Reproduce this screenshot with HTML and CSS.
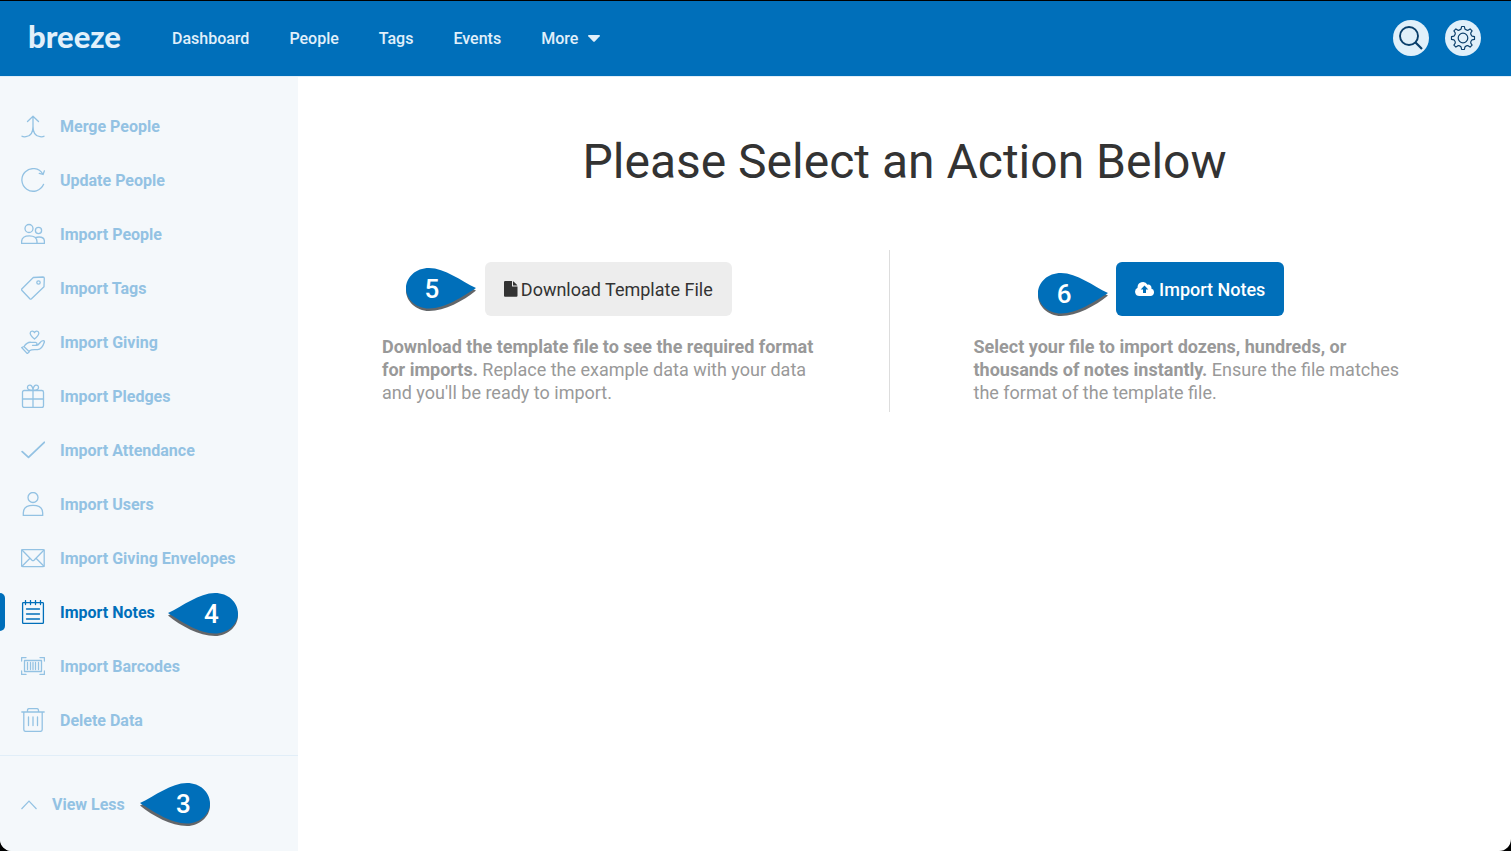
FILE: index.html
```
<!DOCTYPE html>
<html lang="en">
<head>
<meta charset="utf-8">
<meta name="viewport" content="width=device-width, initial-scale=1">
<title>Breeze - Import Notes</title>
<link rel="stylesheet" href="styles.css">
</head>
<body>
<svg class="sprite" aria-hidden="true">
  <symbol id="drop" viewBox="0 0 72 46">
    <path class="drop-shade" d="M1 23.500C16 16.500 32 3.500 48 3.500C61 3.500 71 13 71 23.500C71 34 61 44 48 44C32 44 14 34 1 23.500Z"/>
    <path class="drop-face" d="M1 21C16 14 32 1 48 1C61 1 71 10 71 21.500C71 32 61 41.500 48 41.500C32 41.500 14 29.500 1 21Z"/>
  </symbol>
</svg>

<header class="topbar">
  <a class="logo" href="#">breeze</a>
  <nav class="mainnav" aria-label="Main">
    <a href="#">Dashboard</a>
    <a href="#">People</a>
    <a href="#">Tags</a>
    <a href="#">Events</a>
    <button class="more" type="button">More
      <svg width="12" height="7" viewBox="0 0 12 7" aria-hidden="true"><path d="M.8 0h10.400q1.200.3.500 1.200L7 6.300q-1 1-2 0L.3 1.200Q-.4.300.8 0z" fill="currentColor"/></svg>
    </button>
  </nav>
  <div class="tools">
    <button class="round" type="button" aria-label="Search">
      <svg width="26" height="26" viewBox="0 0 26 26"><circle cx="11" cy="11" r="9" stroke-width="1.900"/><path d="M17.300 17.300L24 24" stroke-width="2.200"/></svg>
    </button>
    <button class="round" type="button" aria-label="Settings">
      <svg width="26" height="26" viewBox="-13 -13 26 26"><circle r="4.800" stroke-width="1.200"/><path stroke-width="1.200" d="M-1.900-9L-1.400-11.500H1.400L1.900-9Q3.500-7.500 5-7.700L7.100-9.100L9.100-7.100L7.700-5Q7.500-3.500 9-1.900L11.500-1.400V1.400L9 1.900Q7.500 3.500 7.700 5L9.100 7.100L7.100 9.100L5 7.700Q3.500 7.500 1.900 9L1.400 11.500H-1.400L-1.900 9Q-3.500 7.500-5 7.700L-7.100 9.100L-9.100 7.100L-7.700 5Q-7.500 3.500-9 1.900L-11.500 1.400V-1.400L-9-1.900Q-7.500-3.500-7.700-5L-9.100-7.100L-7.100-9.100L-5-7.700Q-3.500-7.500-1.900-9Z"/></svg>
    </button>
  </div>
</header>

<div class="shell">
  <aside class="sidebar">
    <nav class="sidenav" aria-label="Data tools">
      <a href="#"><svg class="icon" viewBox="0 0 24 24"><path d="M6.500 7.500L12 2.200l5.500 5.300M12 2.500v10c0 6-2.500 9.800-7 10.200-2 .2-3.300.1-4-.5M12 12.500c0 6 2.500 9.800 7 10.200 2 .2 3.300.1 4-.5"/></svg>Merge People</a>
      <a href="#"><svg class="icon" viewBox="0 0 24 24"><path d="M22.600 16.300A11.300 11.300 0 1 1 21.800 6M18.300 5.300l3.800 1.200 1.300-3.700"/></svg>Update People</a>
      <a href="#"><svg class="icon" viewBox="0 0 24 24"><circle cx="8" cy="6.500" r="4"/><circle cx="17.500" cy="8.500" r="3.100"/><path d="M.6 21.400v-1.600c0-4 3-6 7.800-6s7.600 2 7.600 6v1.600zM14.500 15.600c1-.4 2-.6 3.500-.6 3.800 0 5.400 2 5.400 4.400v2H16"/></svg>Import People</a>
      <a href="#"><svg class="icon" viewBox="0 0 24 24"><path d="M12.300 1.500L22 1q1.300 0 1.300 1.300l-.3 8.500L10.500 22.700q-.9.800-1.700 0L1 14.500q-.9-.9 0-1.800z"/><circle cx="17.500" cy="6.500" r="1.700"/></svg>Import Tags</a>
      <a href="#"><svg class="icon" viewBox="0 0 24 24"><path d="M13.500 9C10 6 9 4.800 9.200 3c.3-2.200 3.300-2.500 4.300-.4 1-2.100 4-1.800 4.300.4C18 4.800 17 6 13.500 9zM.7 17.500l2.200-1 5.400 5.200-2 1.900zM3 16.500c2-3 4-4.500 7-4.200h4.500c2 .2 2 2.800 0 3h-3 4c3 0 3.400-4.500 6.500-4.700 1-.1 1.600.6 1.300 1.700-1.300 4-3.300 7.300-6.800 7.300-3.500.1-6-.5-8 1.200"/></svg>Import Giving</a>
      <a href="#"><svg class="icon" viewBox="0 0 24 24"><rect x="1.500" y="6.500" width="21" height="17" rx="1.700"/><path d="M1.500 15h21M12 6.500v17M12 6.300C8 6.500 6.400 5.300 6.500 3.300 6.700.2 11.500-.5 12 6.300 12.500-.5 17.300.2 17.500 3.300c.1 2-1.500 3.200-5.500 3z"/></svg>Import Pledges</a>
      <a href="#"><svg class="icon" viewBox="0 0 24 24"><path d="M1.200 13.700l6.300 5.600L23.300 4.300" stroke-width="1.800"/></svg>Import Attendance</a>
      <a href="#"><svg class="icon" viewBox="0 0 24 24"><circle cx="12" cy="5.500" r="5"/><path d="M2.300 23.400V21c0-5 3.500-7.600 9.700-7.600s9.700 2.600 9.700 7.600v2.400z"/></svg>Import Users</a>
      <a href="#"><svg class="icon" viewBox="0 0 24 24"><rect x=".6" y="3.600" width="22.600" height="17" rx="1"/><path d="M1 4l10 10.200q1 .9 2 0L23 4M1 20.200l8-8M23 20.200l-8-8"/></svg>Import Giving Envelopes</a>
      <a href="#" class="active" aria-current="page"><svg class="icon" viewBox="0 0 24 24"><rect x="1.600" y="2.600" width="20.800" height="20.800" rx=".8"/><path d="M4.500.6v4M9.500.6v4M14.500.6v4M19.500.6v4M5.500 9h13M5.500 14h13M5.500 19h13"/></svg>Import Notes
        <span class="callout callout-left"><svg width="72" height="46" aria-hidden="true"><use href="#drop"/></svg><b>4</b></span></a>
      <a href="#"><svg class="icon" viewBox="0 0 24 24"><path d="M.6 7V3.600H5M19 3.600h4.400V7M.6 17v3.400H5M19 20.400h4.400V17"/><rect x="3.500" y="6.500" width="17" height="11"/><path d="M6.500 8.500v7M9.500 8.500v7M12 8.500v7M14.500 8.500v7M17.500 8.500v7"/></svg>Import Barcodes</a>
      <a href="#"><svg class="icon" viewBox="0 0 24 24"><path d="M.8 4h22.400M2.800 4v17.500q0 1.900 1.900 1.900h14.600q1.900 0 1.900-1.900V4M6.500 4V2.300q0-1.700 1.700-1.700h7.600q1.700 0 1.700 1.700V4M7.500 9v8.500M12 9v8.500M16.500 9v8.500"/></svg>Delete Data</a>
    </nav>
    <div class="sidefoot">
      <button class="less" type="button"><svg width="16" height="10" viewBox="0 0 16 10" aria-hidden="true"><path d="M.5 9L8 1.200 15.500 9" fill="none" stroke="currentColor" stroke-width="1.200"/></svg>View Less
        <span class="callout callout-left"><svg width="72" height="46" aria-hidden="true"><use href="#drop"/></svg><b>3</b></span></button>
    </div>
  </aside>

  <main class="content">
    <h1>Please Select an Action Below</h1>
    <div class="actions">
      <section class="action">
        <div class="btnwrap">
          <span class="callout callout-right"><svg width="72" height="46" aria-hidden="true"><use href="#drop"/></svg><b>5</b></span>
          <button class="btn" type="button"><svg width="14" height="16" viewBox="0 0 14 16" aria-hidden="true"><path d="M1.200 0H8v5.500h5.500v9.300q0 1-1 1H1q-1 0-1-1V1.100Q0 0 1.200 0zM9 .2q.5.100.8.500l3.100 3.100q.4.400.5.700H9z" fill="currentColor"/></svg>Download Template File</button>
        </div>
        <p><strong>Download the template file to see the required format for imports.</strong> Replace the example data with your data and you'll be ready to import.</p>
      </section>
      <section class="action">
        <div class="btnwrap">
          <span class="callout callout-right lower"><svg width="72" height="46" aria-hidden="true"><use href="#drop"/></svg><b>6</b></span>
          <button class="btn primary" type="button"><svg width="20" height="16" viewBox="0 0 20 16" aria-hidden="true"><path fill-rule="evenodd" d="M4.500 15A4.300 4.300 0 0 1 2.600 6.800 5.300 5.300 0 0 1 12.500 3.700 3 3 0 0 1 16.300 7.400 3.900 3.900 0 0 1 15.500 15zM9.500 4.500L5.700 8.600H8V12h3V8.600h2.300z" fill="currentColor"/></svg>Import Notes</button>
        </div>
        <p><strong>Select your file to import dozens, hundreds, or thousands of notes instantly.</strong> Ensure the file matches the format of the template file.</p>
      </section>
    </div>
  </main>
</div>
</body>
</html>
```

FILE: styles.css
```
* { box-sizing: border-box; }

html { background: #000; }

body {
  margin: 0;
  min-height: 100vh;
  display: flex;
  flex-direction: column;
  font-family: Roboto, "Liberation Sans", sans-serif;
  font-size: 16px;
  color: #333;
  background: #000;
}

a { color: inherit; text-decoration: none; }

button {
  font: inherit;
  color: inherit;
  background: none;
  border: 0;
  padding: 0;
  cursor: pointer;
}

.sprite { position: absolute; width: 0; height: 0; }

/* Top bar */
.topbar {
  display: flex;
  align-items: center;
  min-height: 77px;
  padding: 0 30px 1px 28px;
  border-top: 1px solid #000;
  border-bottom: 1px solid #e1eef8;
  background: #006fba;
  color: #e1f0fa;
}

.logo {
  margin-right: 51px;
  padding-bottom: 4px;
  font-family: Lato, sans-serif;
  font-size: 31px;
  line-height: 40px;
  font-weight: 900;
}

.mainnav { display: flex; align-items: center; gap: 40px; font-weight: 500; }

.more { display: flex; align-items: center; gap: 10px; }

.tools { display: flex; gap: 16px; margin-left: auto; }

.round {
  display: grid;
  place-items: center;
  width: 36px;
  height: 36px;
  border-radius: 50%;
  background: #e1f0fa;
  color: #0b3f6b;
}

.round svg { fill: none; stroke: currentColor; stroke-linejoin: round; }

/* Layout */
.shell {
  flex: 1;
  display: flex;
  background: #fff;
  border-radius: 0 0 12px 12px;
}

.sidebar {
  flex: 0 0 298px;
  display: flex;
  flex-direction: column;
  background: #f4f8fb;
  color: #93c2e3;
  font-weight: 700;
  border-bottom-left-radius: 12px;
}

.sidenav { padding: 22px 0 8px; }

.sidenav a {
  position: relative;
  display: flex;
  align-items: center;
  gap: 15px;
  height: 54px;
  padding-left: 21px;
}

.sidenav .active { color: #006fba; }

.sidenav .active::before {
  content: "";
  position: absolute;
  left: 0;
  top: 8px;
  width: 5px;
  height: 38px;
  border-radius: 0 5px 5px 0;
  background: #006fba;
}

.icon {
  width: 24px;
  height: 24px;
  fill: none;
  stroke: currentColor;
  stroke-width: 1.3;
  stroke-linecap: round;
  stroke-linejoin: round;
}

.sidefoot {
  flex: 1;
  display: flex;
  align-items: center;
  min-height: 96px;
  padding: 2px 0 0 21px;
  border-top: 1px solid #e1eef8;
}

.less { position: relative; display: flex; align-items: center; gap: 15px; }

/* Numbered callouts */
.callout {
  position: absolute;
  width: 72px;
  height: 46px;
  color: #fff;
  pointer-events: none;
}

.callout svg { display: block; }

.callout b {
  position: absolute;
  inset: 0 0 2px 0;
  display: grid;
  place-items: center;
  font-size: 26px;
  line-height: 26px;
  font-weight: 500;
}

.drop-face { fill: #006fba; }
.drop-shade { fill: #636669; }

.callout-left b { padding-left: 17px; }
.callout-right b { padding-right: 18px; }
.callout-right svg { transform: scaleX(-1); }

.sidenav .callout { left: 167px; top: 7px; }
.less .callout { left: 118px; top: -13px; }

/* Content */
.content { flex: 1; padding: 55px 15px 0; }

h1 {
  margin: 0 0 58px;
  font-size: 48px;
  line-height: 60px;
  font-weight: 400;
  text-align: center;
}

.actions { display: grid; grid-template-columns: 1fr 1fr; gap: 30px; padding: 0 15px; }

.action { padding: 12px 54px 8px; }
.action:first-child { border-right: 1px solid #ddd; }

.btnwrap { position: relative; width: fit-content; margin: 0 auto; }
.btnwrap .callout { right: calc(100% + 8px); top: 5px; }
.btnwrap .lower { right: calc(100% + 7px); top: 10px; }

.btn {
  display: flex;
  align-items: center;
  gap: 3px;
  height: 54px;
  padding: 0 19px;
  border-radius: 6px;
  background: #ededed;
  font-size: 18px;
  color: #333;
}

.btn.primary { gap: 4px; background: #006fba; color: #fff; font-weight: 500; }

.action p {
  margin: 19px 0 0;
  font-size: 18px;
  line-height: 23px;
  color: #999;
}
```
